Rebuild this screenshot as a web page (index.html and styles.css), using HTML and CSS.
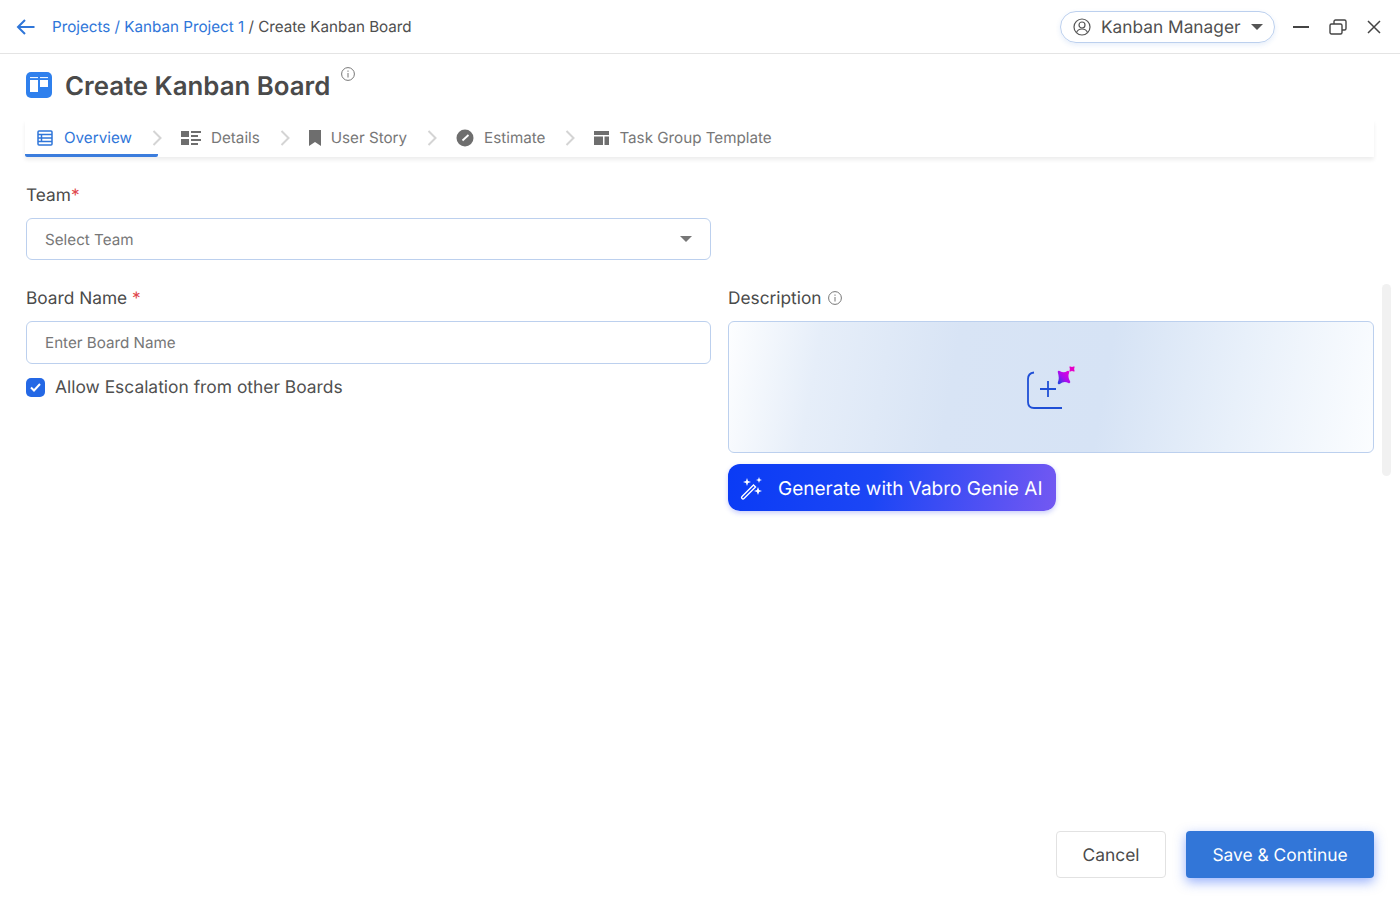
FILE: index.html
```html
<!DOCTYPE html>
<html lang="en">
<head>
    <meta charset="UTF-8">
    <title>Create Kanban Board</title>
    <link rel="stylesheet" href="styles.css">
</head>
<body>
<div class="page">
    <div class="topbar">
        <svg class="back" width="20" height="18" viewBox="0 0 20 18"><path d="M18.500 9H2M9 2L2 9l7 7" fill="none" stroke="#2f76d9" stroke-width="2"/></svg>
        <div class="crumbs"><a>Projects / Kanban Project 1</a> / Create Kanban Board</div>
        <div class="role">
            <svg width="18" height="18" viewBox="0 0 18 18" fill="none" stroke="#555" stroke-width="1.200"><circle cx="9" cy="9" r="8"/><circle cx="9" cy="7" r="3"/><path d="M3.500 14.500c1-2.500 3-3.500 5.500-3.500s4.500 1 5.500 3.500"/></svg>
            <span>Kanban Manager</span>
            <i class="caret"></i>
        </div>
        <div class="winbtns">
            <svg width="16" height="16" viewBox="0 0 16 16"><path d="M0 8h16" stroke="#444" stroke-width="2"/></svg>
            <svg width="18" height="16" viewBox="0 0 18 16" fill="none" stroke="#444" stroke-width="1.400"><rect x="1" y="5" width="12" height="10" rx="1.500"/><path d="M5 5V2.500C5 1.700 5.700 1 6.500 1h9c.8 0 1.500.7 1.500 1.500v7c0 .8-.7 1.500-1.500 1.500H13"/></svg>
            <svg width="14" height="14" viewBox="0 0 14 14"><path d="M1 1l12 12M13 1L1 13" stroke="#444" stroke-width="1.500"/></svg>
        </div>
    </div>

    <div class="titlerow">
        <div class="boardicon"><svg width="18" height="16" viewBox="0 0 18 16"><path d="M0 .6h8M10 .6h8" stroke="#fff" stroke-width="1"/><rect x="0" y="3" width="8" height="12" fill="#fff"/><rect x="10" y="3" width="8" height="7" fill="#fff"/></svg></div>
        <h1>Create Kanban Board</h1>
        <svg class="title-info" width="14" height="14" viewBox="0 0 14 14"><circle cx="7" cy="7" r="6.400" fill="none" stroke="#777"/><path d="M7 6v4.500M7 3.500v1.300" stroke="#777"/></svg>
    </div>

    <div class="tabs">
        <div class="tab current">
            <svg width="16" height="16" viewBox="0 0 16 16" fill="none" stroke="#2f76d9" stroke-width="1.500"><rect x="1" y="1" width="14" height="14" rx="1"/><path d="M1 4.500h14M1 8h14M1 11.500h14M4.500 4.500v7"/></svg>
            Overview
        </div>
        <svg class="chev first" width="10" height="16" viewBox="0 0 10 16"><path d="M1.500 1l7 7-7 7" fill="none" stroke="#d4d4d4" stroke-width="2"/></svg>
        <div class="tab">
            <svg width="20" height="16" viewBox="0 0 20 16" fill="#6e6e6e"><rect y="1" width="8" height="6"/><rect y="9" width="8" height="6"/><rect x="10" y="1" width="10" height="2"/><rect x="10" y="5" width="7" height="2"/><rect x="10" y="9" width="10" height="2"/><rect x="10" y="13" width="7" height="2"/></svg>
            Details
        </div>
        <svg class="chev" width="10" height="16" viewBox="0 0 10 16"><path d="M1.500 1l7 7-7 7" fill="none" stroke="#d4d4d4" stroke-width="2"/></svg>
        <div class="tab">
            <svg width="12" height="16" viewBox="0 0 12 16" fill="#6e6e6e"><path d="M0 0h12v16l-6-4-6 4z"/></svg>
            User Story
        </div>
        <svg class="chev" width="10" height="16" viewBox="0 0 10 16"><path d="M1.500 1l7 7-7 7" fill="none" stroke="#d4d4d4" stroke-width="2"/></svg>
        <div class="tab">
            <svg width="18" height="18" viewBox="0 0 18 18"><circle cx="9" cy="9" r="8.500" fill="#6e6e6e"/><path d="M6.500 11.500L12.500 6" stroke="#fff" stroke-width="1.800"/></svg>
            Estimate
        </div>
        <svg class="chev" width="10" height="16" viewBox="0 0 10 16"><path d="M1.500 1l7 7-7 7" fill="none" stroke="#d4d4d4" stroke-width="2"/></svg>
        <div class="tab">
            <svg width="15" height="14" viewBox="0 0 15 14" fill="#6e6e6e"><rect width="15" height="4"/><rect y="5.500" width="9" height="8.500"/><rect x="10.500" y="5.500" width="4.500" height="8.500"/></svg>
            Task Group Template
        </div>
    </div>

    <div class="form">
        <div class="field">
            <label>Team<span class="req">*</span></label>
            <div class="input select">Select Team<i class="caret"></i></div>
        </div>
        <div class="blank"></div>
        <div class="field">
            <label>Board Name <span class="req">*</span></label>
            <div class="input">Enter Board Name</div>
            <div class="check">
                <span class="box"><svg width="11" height="9" viewBox="0 0 11 9"><path d="M1 4.500l3 3 6-6.500" fill="none" stroke="#fff" stroke-width="2"/></svg></span>
                Allow Escalation from other Boards
            </div>
        </div>
        <div class="field">
            <label>Description<svg class="info" width="14" height="14" viewBox="0 0 14 14"><circle cx="7" cy="7" r="6.400" fill="none" stroke="#777"/><path d="M7 6v4.500M7 3.500v1.300" stroke="#777"/></svg></label>
            <div class="descbox">
                <svg width="50" height="46" viewBox="0 0 50 46">
                    <defs><linearGradient id="spark" x1="0" y1="1" x2="1" y2="0"><stop offset="0" stop-color="#2d3fe0"/><stop offset=".45" stop-color="#a80cf0"/><stop offset="1" stop-color="#e600d8"/></linearGradient></defs>
                    <path d="M8 8.500C4 9 2 11 2 15V38C2 42 4 44 8 44H36" fill="none" stroke="#1f4fd6" stroke-width="1.800"/>
                    <path d="M22 17v16M14 25h16" stroke="#1f4fd6" stroke-width="1.800"/>
                    <path d="M33 8Q38 11 42 8Q40 13 43 18Q38 15 33 19Q35 14 33 8z" fill="url(#spark)" stroke="url(#spark)" stroke-width="2.500" stroke-linejoin="round"/>
                    <path d="M44 3Q46 4 48 3Q47 5 48 7Q46 6 44 7Q45 5 44 3z" fill="#e600c8" stroke="#e600c8" stroke-width="1.200" stroke-linejoin="round"/>
                </svg>
            </div>
            <div class="genie">
                <svg width="24" height="24" viewBox="0 0 24 24" fill="#fff"><path d="M2 20.500L13.500 9l2 2L4 22.500c-.6.600-1.400.600-2 0s-.6-1.400 0-2z" fill="none" stroke="#fff" stroke-width="1.400"/><path d="M7 2l1 3 3 1-3 1-1 3-1-3-3-1 3-1zM19 1l.8 2.200L22 4l-2.200.8L19 7l-.8-2.200L16 4l2.200-.8zM18 11l1.100 3 2.900 1-2.900 1-1.100 3-1.100-3-2.900-1 2.900-1z"/></svg>
                Generate with Vabro Genie AI
            </div>
        </div>
    </div>

    <div class="footer">
        <div class="btn cancel">Cancel</div>
        <div class="btn save">Save &amp; Continue</div>
    </div>

    <div class="scrollthumb"></div>
</div>
</body>
</html>
```

FILE: styles.css
```css
* {
    padding: 0;
    margin: 0;
    box-sizing: border-box;
}

body {
    background: #fff;
    font-family: Inter, "Liberation Sans", sans-serif;
    color: #4a4a4a;
    text-rendering: geometricPrecision;
}

.page {
    width: 1400px;
    height: 900px;
    position: relative;
    overflow: hidden;
    display: flex;
    flex-direction: column;
}

.topbar {
    height: 54px;
    border-bottom: 1px solid #e4e4e4;
    display: flex;
    align-items: center;
    padding: 0 19px 0 16px;
}

.back {
    margin-right: 16px;
}

.crumbs {
    font-size: 15.200px;
    color: #4f4f4f;
}

.crumbs a {
    color: #2f76d9;
}

.role {
    margin-left: auto;
    width: 215px;
    height: 32px;
    border: 1px solid #bcd0ee;
    border-radius: 16px;
    box-shadow: 0 2px 5px rgba(47, 118, 217, 0.12);
    display: flex;
    align-items: center;
    padding-left: 12px;
    font-size: 17.300px;
    color: #4f4f4f;
}

.role span {
    margin-left: 10px;
    padding-top: 1px;
}

.caret {
    width: 0;
    height: 0;
    border-left: 6px solid transparent;
    border-right: 6px solid transparent;
    border-top: 6px solid #555;
}

.role .caret {
    margin-left: 11px;
}

.winbtns {
    display: flex;
    align-items: center;
    margin-left: 18px;
    gap: 20px;
}

.titlerow {
    display: flex;
    align-items: flex-start;
    padding: 18px 0 0 26px;
    height: 66px;
}

.boardicon {
    width: 26px;
    height: 26px;
    border-radius: 5px;
    background: #2f80ed;
    display: flex;
    align-items: center;
    justify-content: center;
}

h1 {
    font-size: 25.800px;
    font-weight: 600;
    color: #4a4a4a;
    line-height: 28px;
    margin: 1px 0 0 13px;
}

.title-info {
    margin: -5px 0 0 11px;
}

.tabs {
    margin: 0 26px 0 25px;
    height: 37px;
    display: flex;
    align-items: flex-start;
    box-shadow: 0 3px 4px rgba(0, 0, 0, 0.07);
    font-size: 15.200px;
    color: #777;
}

.tab {
    height: 37px;
    display: flex;
    align-items: center;
    gap: 10px;
    padding-bottom: 2px;
    white-space: nowrap;
}

.tab svg {
    flex: none;
}

.tab.current {
    width: 133px;
    padding: 1px 0 0 12px;
    gap: 11px;
    color: #2f76d9;
    border-bottom: 3px solid #3b7ddd;
    border-radius: 0 0 2px 2px;
}

.chev {
    margin: 10px 19px 0 20px;
}

.chev.first {
    margin-left: -6px;
    margin-right: 19px;
}

.form {
    padding: 26px 26px 0 26px;
    display: grid;
    grid-template-columns: 685px 646px;
    column-gap: 17px;
    row-gap: 26px;
}

label {
    display: flex;
    align-items: center;
    height: 24px;
    font-size: 17.300px;
    color: #4a4a4a;
    margin-bottom: 11px;
    white-space: pre;
}

.info {
    margin-left: 6px;
}

.req {
    color: #e0474c;
}

.input {
    height: 43px;
    border: 1px solid #bcd0ee;
    border-radius: 6px;
    padding-left: 18px;
    font-size: 15.200px;
    color: #777;
    display: flex;
    align-items: center;
    justify-content: space-between;
}

.select {
    height: 42px;
    padding-right: 18px;
}

.select .caret {
    border-top-color: #777;
}

.check {
    display: flex;
    align-items: center;
    gap: 10px;
    margin-top: 13px;
    font-size: 17.400px;
    color: #4f4f4f;
}

.box {
    width: 19px;
    height: 19px;
    border-radius: 5px;
    background: #2468e5;
    display: flex;
    align-items: center;
    justify-content: center;
}

.descbox {
    height: 132px;
    border: 1px solid #bcd0ee;
    border-radius: 6px;
    background: linear-gradient(100deg, #fdfeff 0%, #e6eef9 14%, #d8e4f5 35%, #d6e3f5 58%, #e8f0fa 78%, #fbfdff 100%);
    display: flex;
    align-items: center;
    justify-content: center;
}

.genie {
    margin-top: 11px;
    width: 328px;
    height: 47px;
    border-radius: 12px;
    background: linear-gradient(100deg, #0a3bf5 0%, #1c46f5 45%, #7358f2 100%);
    box-shadow: 0 2px 5px rgba(40, 60, 240, 0.25);
    color: #fff;
    font-size: 19px;
    display: flex;
    align-items: center;
    gap: 14px;
    padding: 1px 0 0 12px;
    white-space: nowrap;
}

.footer {
    margin-top: auto;
    padding: 0 26px 22px 0;
    display: flex;
    justify-content: flex-end;
    gap: 20px;
}

.btn {
    height: 47px;
    border-radius: 4px;
    font-size: 17.400px;
    padding-top: 1px;
    display: flex;
    align-items: center;
    justify-content: center;
}

.cancel {
    width: 110px;
    border: 1px solid #e2e2e2;
    color: #4a4a4a;
}

.save {
    width: 188px;
    background: #3276d8;
    color: #fff;
    box-shadow: 0 4px 12px rgba(50, 100, 250, 0.5);
}

.scrollthumb {
    position: absolute;
    left: 1382px;
    top: 284px;
    width: 9px;
    height: 192px;
    border-radius: 5px;
    background: #f1f1f1;
}
```
